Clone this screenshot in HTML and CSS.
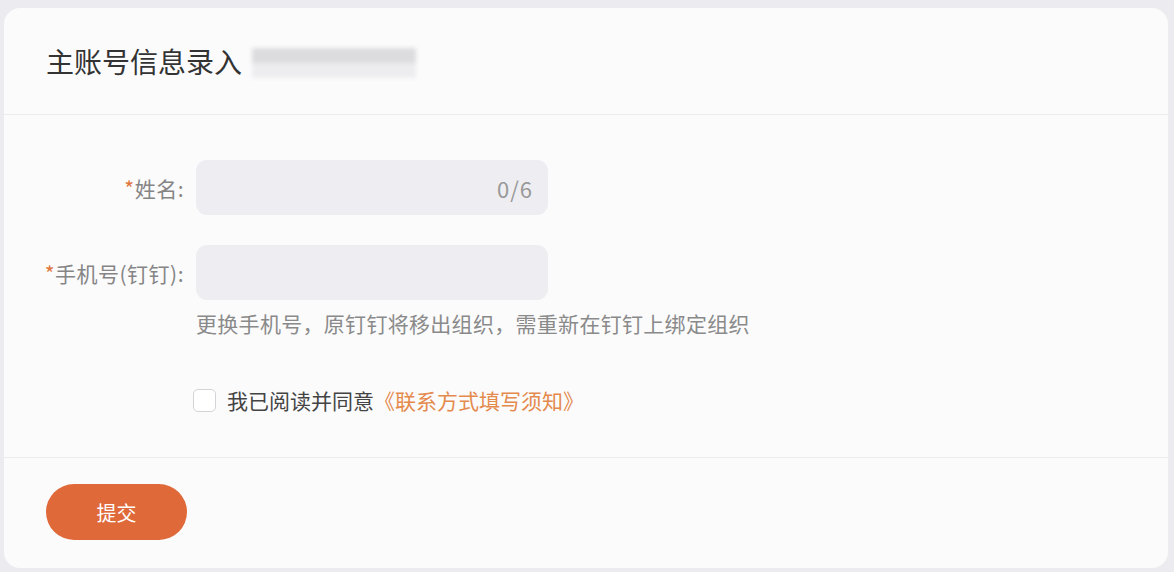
FILE: index.html
```html
<!DOCTYPE html>
<html lang="zh-CN">
<head>
<meta charset="UTF-8" />
<meta name="viewport" content="width=device-width, initial-scale=1" />
<title>主账号信息录入</title>
<link rel="stylesheet" href="styles.css">
</head>
<body>
<div class="card">
  <div class="card-head">
    <h1>主账号信息录入</h1>
    <span class="masked"></span>
  </div>

  <form class="card-body" id="account-form">
    <div class="row">
      <label class="label" for="name"><i>*</i>姓名:</label>
      <div class="field">
        <input type="text" id="name" maxlength="6" />
        <span class="count">0/6</span>
      </div>
    </div>
    <div class="row">
      <label class="label" for="phone"><i>*</i>手机号(钉钉):</label>
      <div class="field">
        <input type="text" id="phone" />
      </div>
    </div>
    <p class="hint">更换手机号，原钉钉将移出组织，需重新在钉钉上绑定组织</p>
    <label class="agree">
      <input type="checkbox" />
      <span class="box"></span>
      我已阅读并同意<a href="#">《联系方式填写须知》</a>
    </label>
  </form>

  <div class="card-foot">
    <button type="submit" form="account-form">提交</button>
  </div>
</div>
</body>
</html>
```

FILE: styles.css
```css
html, body {
  margin: 0;
  height: 100%;
}
body {
  font-family: "Noto Sans CJK SC", "Noto Sans", sans-serif;
  background: #ebebf0;
  padding: 8px 6px 4px 4px;
  box-sizing: border-box;
  display: flex;
  flex-direction: column;
}
.card {
  flex: 1;
  background: #fbfbfc;
  border-radius: 16px;
  display: flex;
  flex-direction: column;
}
.card-head {
  height: 107px;
  display: flex;
  align-items: center;
  padding-left: 42px;
  border-bottom: 1px solid #ececf0;
  box-sizing: border-box;
}
.card-head h1 {
  margin: 0;
  font-size: 28px;
  font-weight: 400;
  color: #333;
  line-height: 1;
}
.masked {
  width: 164px;
  height: 30px;
  margin-left: 10px;
  margin-top: 4px;
  background: linear-gradient(180deg, #d9d9dc 0 50%, #ececee 50% 100%);
  filter: blur(2px);
  opacity: 0.9;
}
.card-body {
  padding: 45px 0 0;
  height: 343px;
  box-sizing: border-box;
  border-bottom: 1px solid #ececf0;
}
.row {
  display: flex;
  align-items: center;
  margin-bottom: 30px;
}
.row + .row {
  margin-bottom: 8px;
}
.label {
  width: 192px;
  text-align: right;
  font-size: 21px;
  letter-spacing: 0.5px;
  color: #858585;
  padding-right: 12px;
  box-sizing: border-box;
  flex: none;
}
.label i {
  font-style: normal;
  color: #e0763e;
}
.field {
  position: relative;
  width: 352px;
  height: 55px;
}
.field input {
  width: 100%;
  height: 100%;
  box-sizing: border-box;
  border: none;
  border-radius: 11px;
  background: #eeeef2;
  padding: 0 60px 0 16px;
  font: inherit;
  font-size: 20px;
  outline: none;
}
.count {
  position: absolute;
  right: 15px;
  top: 50%;
  transform: translateY(-50%);
  font-size: 22px;
  letter-spacing: 1px;
  color: #999;
}
.hint {
  margin: 0 0 0 192px;
  font-size: 21px;
  letter-spacing: 0.3px;
  line-height: 30px;
  color: #8a8a8a;
}
.agree {
  display: flex;
  align-items: center;
  margin: 47px 0 0 189px;
  font-size: 21px;
  color: #444;
  cursor: pointer;
}
.agree input {
  display: none;
}
.box {
  width: 21px;
  height: 21px;
  border: 1.5px solid #d4d4d8;
  border-radius: 5px;
  background: #fff;
  margin-right: 11px;
}
.agree a {
  color: #e48a4c;
  text-decoration: none;
}
.card-foot {
  padding: 26px 0 0 42px;
}
button {
  width: 141px;
  height: 56px;
  border: none;
  border-radius: 28px;
  background: #e0693a;
  color: #fff;
  font: inherit;
  font-size: 20px;
  cursor: pointer;
}
```
